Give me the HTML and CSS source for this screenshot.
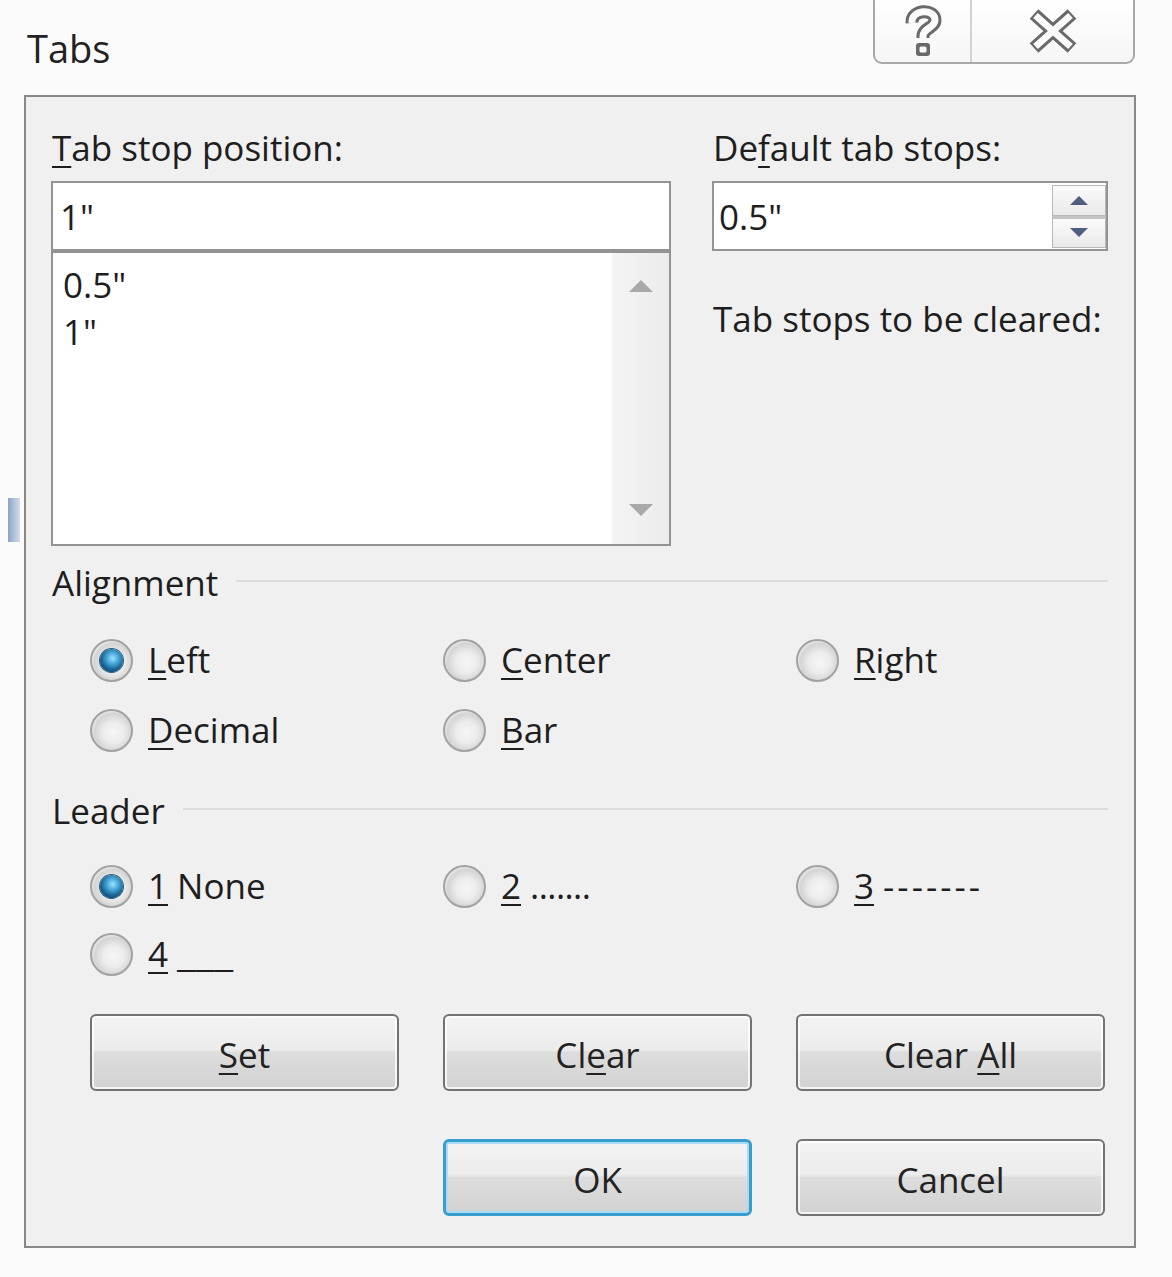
FILE: index.html
```html
<!DOCTYPE html>
<html>
<head>
<meta charset="utf-8">
<title>Tabs</title>
<link rel="stylesheet" href="styles.css">
</head>
<body>
<div class="smudge"></div>
<div class="window">
  <div class="titlebar">
    <div class="title">Tabs</div>
    <div class="caption">
      <div class="cap-btn help">
        <svg width="42" height="54" viewBox="0 0 42 54">
          <g fill="none" stroke-linejoin="round">
            <path d="M10 19 C9 5 33 4 33 16 C33 24 21 24 21 32 L21 34" stroke="#6a6a6a" stroke-width="13"/>
            <path d="M10 19 C9 5 33 4 33 16 C33 24 21 24 21 32 L21 34" stroke="#fbfbfb" stroke-width="7"/>
          </g>
          <rect x="14" y="39" width="14" height="13" rx="3" fill="#6a6a6a"/>
          <rect x="17.5" y="42.5" width="7" height="6" rx="1.5" fill="#fbfbfb"/>
        </svg>
      </div>
      <div class="cap-btn close">
        <svg width="50" height="44" viewBox="0 0 50 44">
          <g stroke-linecap="butt">
            <path d="M6 5 L44 39 M44 5 L6 39" stroke="#6a6a6a" stroke-width="13"/>
            <path d="M7.5 6.5 L42.5 37.5 M42.5 6.5 L7.5 37.5" stroke="#fbfbfb" stroke-width="7"/>
          </g>
        </svg>
      </div>
    </div>
  </div>

  <div class="panel">
    <div class="top">
      <div class="col">
        <div class="label"><u>T</u>ab stop position:</div>
        <div class="textbox">1"</div>
        <div class="listbox">
          <div class="items">
            <div>0.5"</div>
            <div>1"</div>
          </div>
          <div class="scroll">
            <span class="tri up"></span>
            <span class="tri down"></span>
          </div>
        </div>
      </div>
      <div class="col">
        <div class="label">De<u>f</u>ault tab stops:</div>
        <div class="textbox spinbox">
          <span class="spin-val">0.5"</span>
          <div class="spinner">
            <div class="sb"><span class="stri up"></span></div>
            <div class="sb"><span class="stri down"></span></div>
          </div>
        </div>
        <div class="label cleared">Tab stops to be cleared:</div>
      </div>
    </div>

    <div class="group-head"><span>Alignment</span><i class="rule"></i></div>
    <div class="options align-opts">
      <div class="opt"><span class="radio on"></span><span><u>L</u>eft</span></div>
      <div class="opt"><span class="radio"></span><span><u>C</u>enter</span></div>
      <div class="opt"><span class="radio"></span><span><u>R</u>ight</span></div>
      <div class="opt"><span class="radio"></span><span><u>D</u>ecimal</span></div>
      <div class="opt"><span class="radio"></span><span><u>B</u>ar</span></div>
    </div>

    <div class="group-head leader-head"><span>Leader</span><i class="rule"></i></div>
    <div class="options leader-opts">
      <div class="opt"><span class="radio on"></span><span><u>1</u> None</span></div>
      <div class="opt"><span class="radio"></span><span><u>2</u> <span class="dots">.......</span></span></div>
      <div class="opt"><span class="radio"></span><span><u>3</u> <span class="dashes">-------</span></span></div>
      <div class="opt"><span class="radio"></span><span><u>4</u> <span class="unders">___</span></span></div>
    </div>

    <div class="buttons">
      <div class="btn"><span><u>S</u>et</span></div>
      <div class="btn"><span>Cl<u>e</u>ar</span></div>
      <div class="btn"><span>Clear <u>A</u>ll</span></div>
      <div class="btn ok"><span>OK</span></div>
      <div class="btn"><span>Cancel</span></div>
    </div>
  </div>
</div>
</body>
</html>
```

FILE: styles.css
```css
* {
  box-sizing: border-box;
  margin: 0;
  padding: 0;
}

html, body {
  width: 1172px;
  height: 1277px;
  overflow: hidden;
}

body {
  background: #fbfbfb;
  font-family: "Open Sans", "Noto Sans", sans-serif;
  color: #1e1e1e;
  position: relative;
}

.smudge {
  position: absolute;
  left: 8px;
  top: 498px;
  width: 12px;
  height: 44px;
  background: linear-gradient(90deg, #6f8fb8, #c9d6e6);
  opacity: 0.8;
}

u {
  text-decoration-thickness: 2px;
  text-underline-offset: 5px;
}

/* ---------- title bar ---------- */
.titlebar {
  height: 95px;
  display: flex;
  justify-content: space-between;
  align-items: flex-start;
}

.title {
  font-size: 38px;
  line-height: 46px;
  padding: 25px 0 0 27px;
  color: #222;
}

.caption {
  display: flex;
  width: 262px;
  height: 64px;
  margin-right: 37px;
  border: 2px solid #a8a8a8;
  border-top: none;
  border-radius: 0 0 9px 9px;
  background: linear-gradient(#fefefe, #f6f6f6);
}

.cap-btn {
  display: flex;
  align-items: center;
  justify-content: center;
}

.help {
  width: 97px;
  border-right: 2px solid #d2d2d2;
}

.close {
  flex: 1;
}

/* ---------- panel ---------- */
.panel {
  margin-left: 24px;
  width: 1112px;
  border: 2px solid #888;
  background: #f0f0f0;
  padding: 29px 26px 30px 25px;
}

.top {
  display: grid;
  grid-template-columns: 620px 396px;
  column-gap: 41px;
}

.label {
  font-size: 35px;
  line-height: 44px;
  height: 44px;
  padding-left: 1px;
  white-space: nowrap;
}

.textbox {
  margin-top: 11px;
  height: 70px;
  border: 2px solid #939393;
  background: #fff;
  font-size: 35px;
  display: flex;
  align-items: center;
  padding-left: 7px;
}

.listbox {
  height: 295px;
  border: 2px solid #939393;
  background: #fff;
  display: flex;
}

.items {
  flex: 1;
  padding: 8px 0 0 10px;
  font-size: 35px;
  line-height: 47px;
}

.scroll {
  width: 57px;
  background: linear-gradient(90deg, #f4f4f4, #ececec);
  display: flex;
  flex-direction: column;
  justify-content: space-between;
  align-items: center;
  padding: 27px 0 28px;
}

.tri {
  width: 0;
  height: 0;
  border-left: 12px solid transparent;
  border-right: 12px solid transparent;
}

.tri.up {
  border-bottom: 12px solid #a9a9a9;
}

.tri.down {
  border-top: 12px solid #a9a9a9;
}

.spinbox {
  padding: 2px 0 1px 5px;
  align-items: stretch;
}

.spin-val {
  flex: 1;
  display: flex;
  align-items: center;
}

.spinner {
  width: 54px;
  display: flex;
  flex-direction: column;
}

.sb {
  flex: 1;
  border: 1px solid #b9b9b9;
  background: linear-gradient(#fbfbfb, #e9e9e9);
  display: flex;
  align-items: center;
  justify-content: center;
}

.sb + .sb {
  border-top: 3px solid #c4c4c4;
}

.stri {
  width: 0;
  height: 0;
  border-left: 9px solid transparent;
  border-right: 9px solid transparent;
}

.stri.up {
  border-bottom: 9px solid #4f5e7e;
}

.stri.down {
  border-top: 9px solid #4f5e7e;
}

.cleared {
  margin-top: 46px;
}

/* ---------- groups ---------- */
.group-head {
  display: flex;
  align-items: flex-start;
  height: 44px;
  margin-top: 15px;
  padding-left: 1px;
}

.group-head span {
  font-size: 35px;
  line-height: 44px;
}

.group-head .rule {
  flex: 1;
  height: 2px;
  margin: 19px 0 0 18px;
  background: #dcdcdc;
}

.leader-head {
  margin-top: 24px;
}

.options {
  display: grid;
  grid-template-columns: repeat(3, 353px);
  padding-left: 39px;
}

.align-opts {
  margin-top: 20px;
  grid-auto-rows: 70px;
}

.leader-opts {
  margin-top: 19px;
  grid-auto-rows: 68px;
}

.opt {
  display: flex;
  align-items: center;
  gap: 15px;
  font-size: 35px;
  line-height: 44px;
  white-space: nowrap;
}

.radio {
  position: relative;
  flex: none;
  width: 43px;
  height: 43px;
  border-radius: 50%;
  border: 2px solid #a2a2a2;
  background: radial-gradient(circle at 55% 55%, #f6f6f6 0, #ececec 35%, #d4d4d4 62%, #f2f2f2 78%, #fafafa 100%);
}

.radio.on::after {
  content: "";
  position: absolute;
  left: 8px;
  top: 8px;
  width: 23px;
  height: 23px;
  border-radius: 50%;
  background: radial-gradient(circle at 55% 40%, #9fe2ff 0, #44a5d6 32%, #175f8e 62%, #0b3d63 100%);
  box-shadow: 0 0 0 1px #2c5d80;
}

.dots {
  letter-spacing: -0.6px;
}

.dashes {
  letter-spacing: 3px;
}

.unders {
  display: inline-block;
  transform: scaleX(1.22);
  transform-origin: left center;
}

/* ---------- buttons ---------- */
.buttons {
  display: grid;
  grid-template-columns: repeat(3, 309px);
  column-gap: 44px;
  row-gap: 48px;
  padding-left: 39px;
  margin-top: 26px;
}

.btn {
  height: 77px;
  border: 2px solid #737373;
  border-radius: 6px;
  background: linear-gradient(#f3f3f3 0%, #ececec 46%, #dddddd 50%, #d2d2d2 100%);
  box-shadow: inset 0 0 0 2px rgba(255, 255, 255, 0.75);
  font-size: 35px;
  display: flex;
  align-items: center;
  justify-content: center;
  color: #222;
  padding-top: 3px;
}

.btn.ok {
  grid-column: 2;
  border: 3px solid #3a9ccd;
  box-shadow: inset 0 0 0 2px #a8dcf2;
}
```
